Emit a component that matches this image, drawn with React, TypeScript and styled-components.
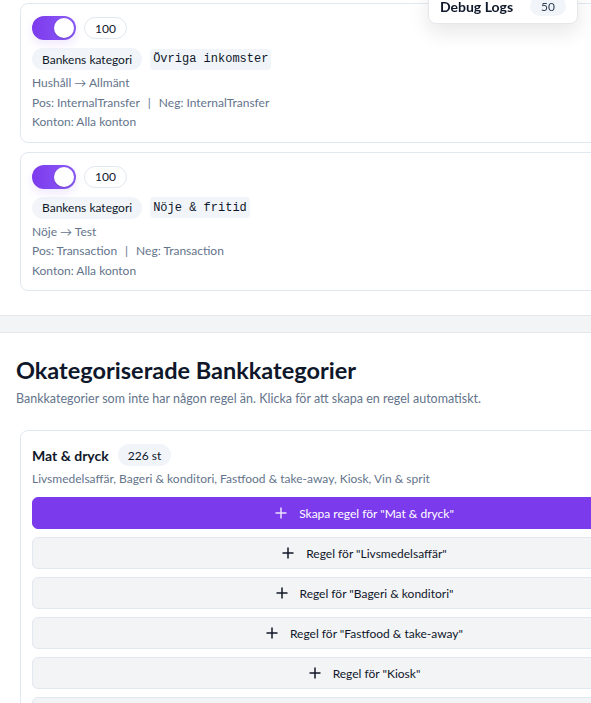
import React from "react";
import styled, { createGlobalStyle } from "styled-components";

const Global = createGlobalStyle`
  html, body { margin: 0; padding: 0; overflow: hidden; background: #f3f4f6; }
  body { font-family: Lato, "Noto Sans", sans-serif; color: #0f172a; }
  * { box-sizing: border-box; }
`;

const Page = styled.div`
  width: 729px;
  display: flex;
  flex-direction: column;
  gap: 16px;
  background: #f3f4f6;
`;

const Section = styled.section<{ $top?: boolean }>`
  background: #fff;
  border-top: ${(p) => (p.$top ? "none" : "1px solid #e5e7eb")};
  border-bottom: 1px solid #e5e7eb;
  padding: ${(p) => (p.$top ? "3px 16px 24px" : "21px 16px 24px")};
`;

const List = styled.div<{ $gap?: number }>`
  display: flex;
  flex-direction: column;
  gap: ${(p) => p.$gap ?? 9}px;
  padding: 0 4px;
`;

const Card = styled.div`
  border: 1px solid #e2e8f0;
  border-radius: 8px;
  background: #fff;
  padding: 12px 11px 10px;
  display: flex;
  flex-direction: column;
`;

const TopRow = styled.div`
  display: flex;
  align-items: center;
  gap: 8px;
  height: 24px;
`;

const Toggle = styled.div`
  width: 44px;
  height: 24px;
  border-radius: 12px;
  background: linear-gradient(90deg, #7c3aed, #8b5cf6);
  position: relative;
  box-shadow: 0 4px 10px rgba(124, 58, 237, 0.12);
  &::after {
    content: "";
    position: absolute;
    top: 2px;
    right: 2px;
    width: 20px;
    height: 20px;
    border-radius: 50%;
    background: #fff;
    box-shadow: 0 1px 2px rgba(0, 0, 0, 0.15);
  }
`;

const Priority = styled.span`
  height: 22px;
  padding: 0 10px;
  border: 1px solid #e2e8f0;
  border-radius: 11px;
  font-size: 12px;
  display: inline-flex;
  align-items: center;
  color: #0f172a;
`;

const ChipRow = styled.div`
  display: flex;
  gap: 8px;
  margin-top: 8px;
  margin-bottom: 3px;
  align-items: center;
`;

const Pill = styled.span`
  height: 22px;
  padding: 0 10px;
  border-radius: 11px;
  background: #f1f5f9;
  font-size: 12px;
  display: inline-flex;
  align-items: center;
  color: #0f172a;
`;

const Code = styled.span`
  height: 21px;
  padding: 0 3px;
  border-radius: 4px;
  background: #f1f5f9;
  font-family: "Liberation Mono", "DejaVu Sans Mono", monospace;
  font-size: 12px;
  display: inline-flex;
  align-items: center;
  color: #0f172a;
`;

const Meta = styled.div`
  font-size: 12px;
  line-height: 19.5px;
  color: #64748b;
`;

const Sep = styled.span`
  margin: 0 8px;
`;

const Heading = styled.h2`
  margin: 0;
  font-size: 23.5px;
  line-height: 32px;
  font-weight: 700;
  color: #0f172a;
`;

const Sub = styled.p`
  margin: 3px 0 21px;
  font-size: 12.5px;
  line-height: 20px;
  color: #64748b;
`;

const CatCard = styled(Card)`
  padding: 13px 11px 12px;
`;

const CatHead = styled.div`
  display: flex;
  align-items: center;
  gap: 9px;
  height: 22px;
`;

const CatName = styled.span`
  font-size: 14px;
  font-weight: 700;
  color: #0f172a;
`;

const CatList = styled.div`
  font-size: 12px;
  line-height: 16px;
  color: #64748b;
  margin-top: 5px;
`;

const Buttons = styled.div`
  display: flex;
  flex-direction: column;
  gap: 8px;
  margin-top: 10px;
`;

const Btn = styled.button<{ $primary?: boolean }>`
  height: 32px;
  border-radius: 6px;
  border: 1px solid ${(p) => (p.$primary ? "#7c3aed" : "#e2e8f0")};
  background: ${(p) => (p.$primary ? "#7c3aed" : "#f3f4f6")};
  color: ${(p) => (p.$primary ? "#fff" : "#0f172a")};
  font-family: inherit;
  font-size: 12px;
  display: flex;
  align-items: center;
  justify-content: center;
  gap: 12px;
  padding: 0;
  cursor: pointer;
`;

const Debug = styled.div`
  position: fixed;
  top: -12px;
  right: 13px;
  width: 150px;
  height: 36px;
  background: #fff;
  border: 1px solid #e5e7eb;
  border-radius: 8px;
  box-shadow: 0 8px 20px rgba(15, 23, 42, 0.1);
  display: flex;
  align-items: center;
  justify-content: space-between;
  padding: 0 11px;
`;

const DebugTitle = styled.span`
  font-size: 14px;
  font-weight: 700;
  color: #0f172a;
`;

const DebugCount = styled.span`
  width: 36px;
  height: 20px;
  border-radius: 10px;
  background: #f1f5f9;
  font-size: 12px;
  display: inline-flex;
  align-items: center;
  justify-content: center;
  color: #334155;
`;

const PlusIcon = ({ light }: { light?: boolean }) => (
  <svg width="12" height="12" viewBox="0 0 12 12" aria-hidden>
    <path
      d="M6 0.5v11M0.5 6h11"
      stroke={light ? "rgba(255,255,255,0.85)" : "#111827"}
      strokeWidth="1.5"
      fill="none"
    />
  </svg>
);

const rules = [
  { chip: "Övriga inkomster", path: "Hushåll → Allmänt", type: "InternalTransfer" },
  { chip: "Nöje & fritid", path: "Nöje → Test", type: "Transaction" },
];

const subs = ["Livsmedelsaffär", "Bageri & konditori", "Fastfood & take-away", "Kiosk", "Vin & sprit"];

export default function App() {
  return (
    <>
      <Global />
      <Page>
        <Section $top>
          <List>
            {rules.map((r) => (
              <Card key={r.chip}>
                <TopRow>
                  <Toggle />
                  <Priority>100</Priority>
                </TopRow>
                <ChipRow>
                  <Pill>Bankens kategori</Pill>
                  <Code>{r.chip}</Code>
                </ChipRow>
                <Meta>{r.path}</Meta>
                <Meta>
                  Pos: {r.type}
                  <Sep>|</Sep>
                  Neg: {r.type}
                </Meta>
                <Meta>Konton: Alla konton</Meta>
              </Card>
            ))}
          </List>
        </Section>
        <Section>
          <Heading>Okategoriserade Bankkategorier</Heading>
          <Sub>Bankkategorier som inte har någon regel än. Klicka för att skapa en regel automatiskt.</Sub>
          <List>
            <CatCard>
              <CatHead>
                <CatName>Mat &amp; dryck</CatName>
                <Pill>226 st</Pill>
              </CatHead>
              <CatList>{subs.join(", ")}</CatList>
              <Buttons>
                <Btn $primary>
                  <PlusIcon light />
                  Skapa regel för "Mat &amp; dryck"
                </Btn>
                {subs.map((s) => (
                  <Btn key={s}>
                    <PlusIcon />
                    Regel för "{s}"
                  </Btn>
                ))}
              </Buttons>
            </CatCard>
          </List>
        </Section>
      </Page>
      <Debug>
        <DebugTitle>Debug Logs</DebugTitle>
        <DebugCount>50</DebugCount>
      </Debug>
    </>
  );
}
